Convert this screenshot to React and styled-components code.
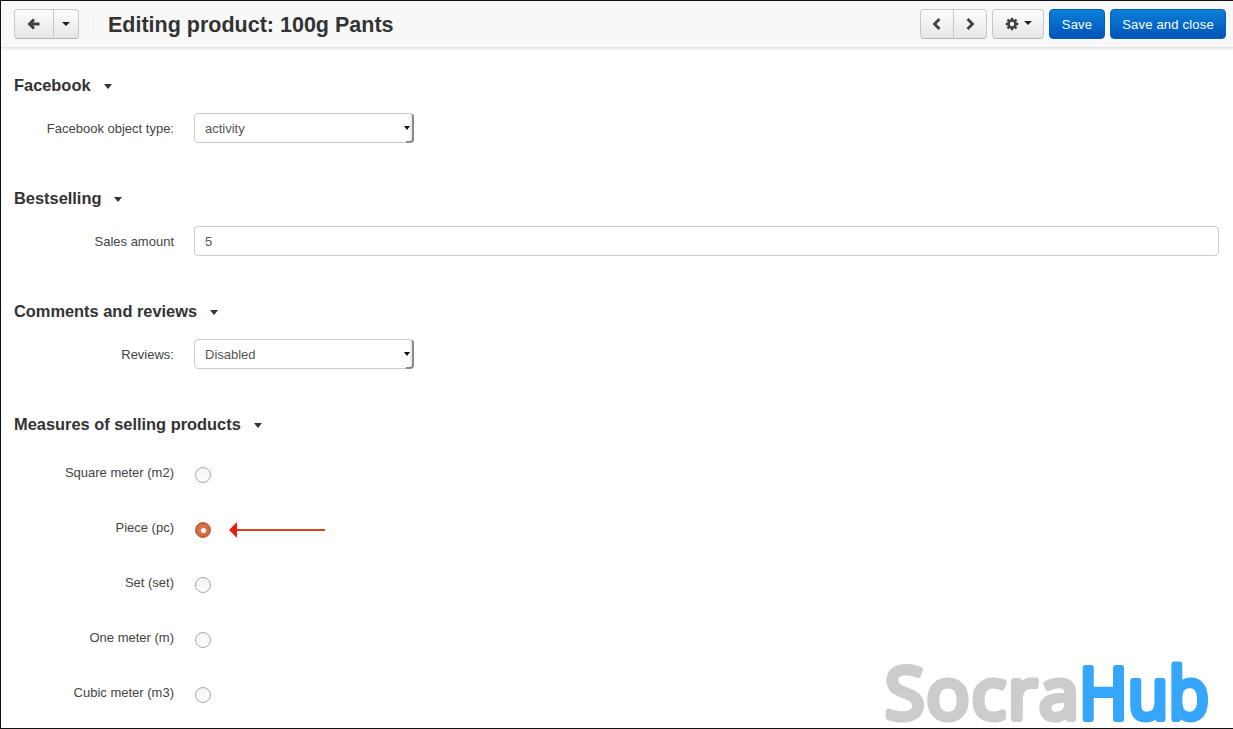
import React from 'react';
import styled, { createGlobalStyle } from 'styled-components';

const GlobalStyle = createGlobalStyle`
  html, body {
    margin: 0;
    padding: 0;
    background: #fff;
  }
  body {
    font-family: "Liberation Sans", Arial, sans-serif;
    font-size: 13px;
    color: #333;
  }
`;

const Frame = styled.div`
  position: relative;
  box-sizing: border-box;
  width: 1233px;
  height: 729px;
  overflow: hidden;
  border: 1px solid #111;
  border-right: 0;
  background: #fff;
`;

const Header = styled.header`
  box-sizing: border-box;
  height: 47px;
  display: flex;
  align-items: center;
  padding: 0 7px 0 13px;
  background: #f8f8f8;
  border-bottom: 1px solid #e6e6e6;
  box-shadow: 0 1px 3px rgba(0, 0, 0, 0.12);
`;

const Group = styled.div`
  display: flex;
  margin-left: ${props => props.$gap || 0}px;
`;

const Tool = styled.div`
  box-sizing: border-box;
  height: 30px;
  width: ${props => props.$w}px;
  display: flex;
  align-items: center;
  justify-content: center;
  gap: 5px;
  color: #404040;
  background: linear-gradient(#fdfdfd, #e6e6e6);
  border: 1px solid #c8c8c8;
  border-bottom-color: #b4b4b4;
  margin-left: ${props => (props.$joined ? '-1px' : 0)};
  border-radius: ${props =>
    props.$pos === 'left' ? '4px 0 0 4px' : props.$pos === 'right' ? '0 4px 4px 0' : '4px'};
`;

const Caret = styled.span`
  width: 0;
  height: 0;
  margin-top: ${props => props.$top || 0}px;
  border-left: 4px solid transparent;
  border-right: 4px solid transparent;
  border-top: 4px solid #222;
`;

const SectionCaret = styled(Caret)`
  margin-top: 2px;
  border-left-width: 4.5px;
  border-right-width: 4.5px;
  border-top: 5px solid #333;
`;

const Divider = styled.div`
  width: 1px;
  height: 30px;
  margin: 0 14px;
  background: #efefef;
`;

const Title = styled.h1`
  flex: 1;
  margin: 0;
  padding-top: 2px;
  font-size: 21.5px;
  font-weight: bold;
  line-height: 30px;
  color: #333;
`;

const PrimaryButton = styled.div`
  box-sizing: border-box;
  height: 30px;
  width: ${props => props.$w}px;
  margin-left: ${props => props.$gap}px;
  display: flex;
  align-items: center;
  justify-content: center;
  font-size: 13px;
  letter-spacing: 0.2px;
  color: #fff;
  background: linear-gradient(#0a80d8, #0054b8);
  border: 1px solid #0a5fb4;
  border-radius: 4px;
`;

const Content = styled.main`
  padding: 25px 0 0 13px;
`;

const Section = styled.section`
  height: 113px;
`;

const SectionTitle = styled.h2`
  display: flex;
  align-items: center;
  gap: 13px;
  margin: 0 0 ${props => props.$space || 16}px;
  font-size: 16.4px;
  font-weight: bold;
  line-height: 24px;
  color: #333;
`;

const Row = styled.div`
  display: flex;
  align-items: ${props => (props.$radio ? 'flex-start' : 'center')};
  height: ${props => (props.$radio ? '55px' : '30px')};
`;

const Label = styled.label`
  box-sizing: border-box;
  width: 160px;
  margin-right: 20px;
  text-align: right;
  font-size: 13px;
  color: #444;
`;

const Select = styled.div`
  position: relative;
  box-sizing: border-box;
  width: 220px;
  height: 30px;
  display: flex;
  align-items: center;
  padding-left: 10px;
  color: #555;
  font-size: 13px;
  border: 1px solid #ccc;
  border-radius: 4px;
  background: #fff;
`;

const SelectArrow = styled.span`
  position: absolute;
  top: 0;
  right: -1px;
  bottom: -1px;
  width: 8px;
  display: flex;
  align-items: center;
  justify-content: flex-end;
  padding-right: 2px;
  box-sizing: border-box;
  background: linear-gradient(90deg, #fff 40%, #e8e8e8);
  border-right: 2px solid #8a8a8a;
  border-bottom: 2px solid #8a8a8a;
  border-radius: 0 3px 4px 0;
`;

const SmallCaret = styled.span`
  width: 0;
  height: 0;
  border-left: 3px solid transparent;
  border-right: 3px solid transparent;
  border-top: 4px solid #111;
`;

const TextInput = styled.div`
  box-sizing: border-box;
  width: 1025px;
  height: 30px;
  display: flex;
  align-items: center;
  padding-left: 10px;
  color: #555;
  font-size: 13px;
  border: 1px solid #ccc;
  border-radius: 4px;
`;

const Radio = styled.span`
  box-sizing: border-box;
  width: 16px;
  height: 16px;
  margin: 2px 0 0 1px;
  border-radius: 50%;
  display: flex;
  align-items: center;
  justify-content: center;
  border: 1px solid ${props => (props.$checked ? '#c2592c' : '#a8a8a8')};
  background: ${props =>
    props.$checked ? 'radial-gradient(#d9734a 40%, #bd5526)' : 'linear-gradient(#f4f4f4, #fff)'};
`;

const RadioDot = styled.span`
  width: 5px;
  height: 5px;
  border-radius: 50%;
  background: #fff;
`;

const Note = styled.div`
  margin: 2px 0 0 18px;
  line-height: 0;
`;

const Watermark = styled.svg`
  position: absolute;
  right: 13px;
  bottom: 1px;
  overflow: visible;
  font-family: "Open Sans", "Liberation Sans", sans-serif;
  font-size: 72px;
  font-weight: normal;
`;

const BackIcon = () => (
  <svg width="14" height="14" viewBox="0 0 14 14">
    <path d="M7 2.5 2.5 7 7 11.5M3 7h9.5" fill="none" stroke="#404040" strokeWidth="3" />
  </svg>
);

const ChevronIcon = ({ flip }) => (
  <svg width="12" height="14" viewBox="0 0 12 14">
    <path
      d={flip ? 'M3.5 2 8.5 7l-5 5' : 'M8.5 2 3.5 7l5 5'}
      fill="none"
      stroke="#404040"
      strokeWidth="2.8"
    />
  </svg>
);

const GearIcon = () => (
  <svg width="14" height="14" viewBox="0 0 13 13">
    <circle cx="6.5" cy="6.5" r="3.3" fill="none" stroke="#404040" strokeWidth="2.4" />
    <path
      d="M6.5.6v2.2M6.5 10.2v2.2M.6 6.5h2.2M10.2 6.5h2.2M2.3 2.3l1.6 1.6M9.1 9.1l1.6 1.6M2.3 10.7l1.6-1.6M9.1 3.9l1.6-1.6"
      stroke="#404040"
      strokeWidth="2.2"
    />
  </svg>
);

const ArrowNote = () => (
  <svg width="96" height="16" viewBox="0 0 96 16">
    <path d="M6 8h90" stroke="#d9431a" strokeWidth="2" />
    <path d="M0 8 8 0v16z" fill="#f01a0a" />
  </svg>
);

const measures = [
  { label: 'Square meter (m2)' },
  { label: 'Piece (pc)', checked: true },
  { label: 'Set (set)' },
  { label: 'One meter (m)' },
  { label: 'Cubic meter (m3)' },
];

function App() {
  return (
    <Frame>
      <GlobalStyle />
      <Header>
        <Group>
          <Tool $w={40} $pos="left">
            <BackIcon />
          </Tool>
          <Tool $w={26} $pos="right" $joined>
            <Caret />
          </Tool>
        </Group>
        <Divider />
        <Title>Editing product: 100g Pants</Title>
        <Group>
          <Tool $w={34} $pos="left">
            <ChevronIcon />
          </Tool>
          <Tool $w={34} $pos="right" $joined>
            <ChevronIcon flip />
          </Tool>
        </Group>
        <Group $gap={5}>
          <Tool $w={52}>
            <GearIcon />
            <Caret $top={-3} />
          </Tool>
        </Group>
        <PrimaryButton $w={56} $gap={5}>Save</PrimaryButton>
        <PrimaryButton $w={116} $gap={5}>Save and close</PrimaryButton>
      </Header>

      <Content>
        <Section>
          <SectionTitle>Facebook <SectionCaret /></SectionTitle>
          <Row>
            <Label>Facebook object type:</Label>
            <Select>activity<SelectArrow><SmallCaret /></SelectArrow></Select>
          </Row>
        </Section>
        <Section>
          <SectionTitle>Bestselling <SectionCaret /></SectionTitle>
          <Row>
            <Label>Sales amount</Label>
            <TextInput>5</TextInput>
          </Row>
        </Section>
        <Section>
          <SectionTitle>Comments and reviews <SectionCaret /></SectionTitle>
          <Row>
            <Label>Reviews:</Label>
            <Select>Disabled<SelectArrow><SmallCaret /></SelectArrow></Select>
          </Row>
        </Section>
        <section>
          <SectionTitle $space={29}>Measures of selling products <SectionCaret /></SectionTitle>
          {measures.map(m => (
            <Row $radio key={m.label}>
              <Label>{m.label}</Label>
              <Radio $checked={m.checked}>{m.checked && <RadioDot />}</Radio>
              {m.checked && <Note><ArrowNote /></Note>}
            </Row>
          ))}
        </section>
      </Content>

      <Watermark width="340" height="72" viewBox="0 0 340 72">
        <g strokeWidth="6" strokeLinejoin="round" strokeLinecap="round">
          <text x="5" y="64" stroke="#ccc" fill="#ccc" textLength="194" lengthAdjust="spacing">
            Socra
          </text>
          <text x="199" y="64" stroke="#36a6fb" fill="#36a6fb" textLength="130" lengthAdjust="spacingAndGlyphs">
            Hub
          </text>
        </g>
      </Watermark>
    </Frame>
  );
}

export default App;
